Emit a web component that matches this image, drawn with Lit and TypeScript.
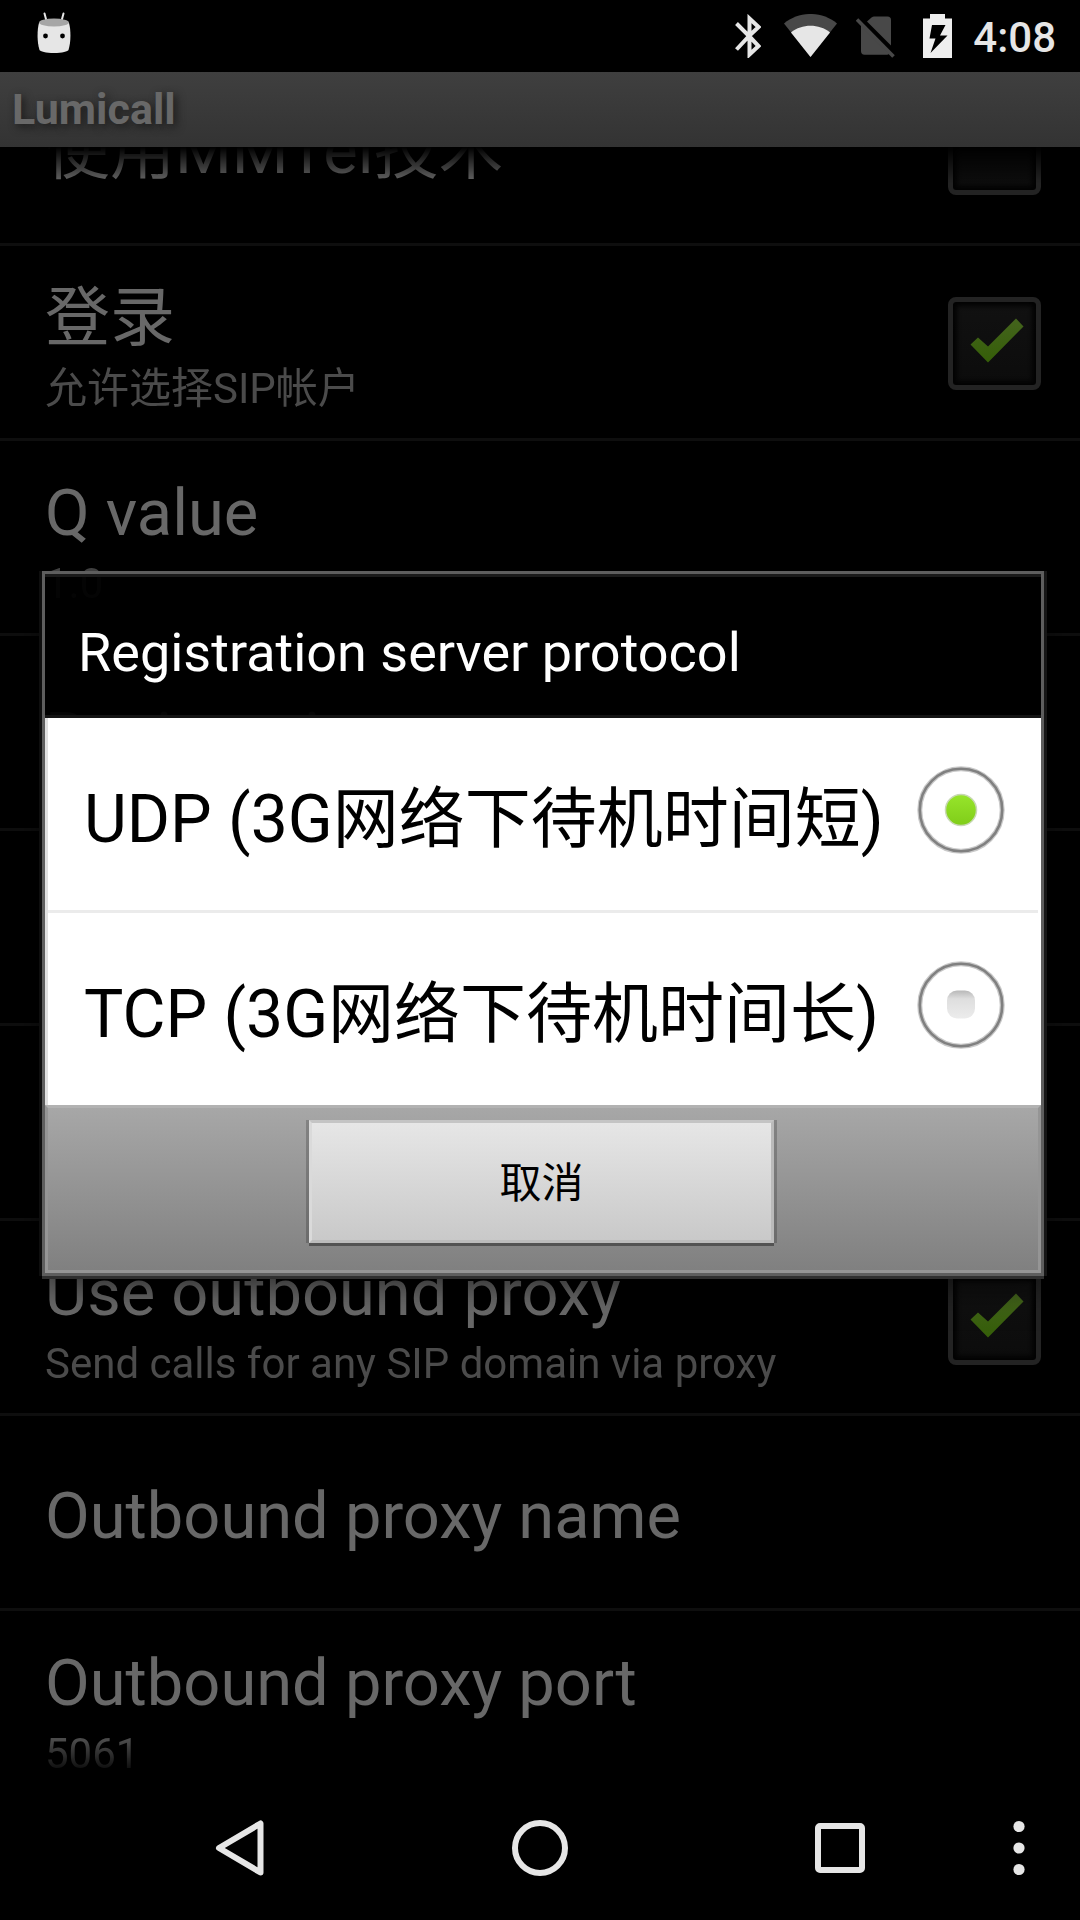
import { LitElement, html, css, svg, nothing } from "lit";
import { customElement, property, state } from "lit/decorators.js";

interface Preference {
  title: string;
  summary?: string;
  checked?: boolean;
}

const PREFERENCES: Preference[] = [
  { title: "使用MMTel技术", checked: false },
  { title: "登录", summary: "允许选择SIP帐户", checked: true },
  { title: "Q value", summary: "1.0" },
  { title: "Registration" },
  { title: "" },
  { title: "" },
  { title: "Use outbound proxy", summary: "Send calls for any SIP domain via proxy", checked: true },
  { title: "Outbound proxy name" },
  { title: "Outbound proxy port", summary: "5061" },
];

const PROTOCOLS = [
  { id: "udp", label: "UDP (3G网络下待机时间短)" },
  { id: "tcp", label: "TCP (3G网络下待机时间长)" },
];

@customElement("status-bar")
export class StatusBar extends LitElement {
  static styles = css`
    :host {
      display: flex;
      align-items: flex-start;
      box-sizing: border-box;
      height: 72px;
      padding: 12px 24px 0 37px;
      background: #000;
      color: #e6e6e6;
    }
    .space { flex: 1; }
    .icon { display: block; flex: none; margin-top: 2px; }
    .robot { margin-top: 0; }
    .bluetooth { margin-right: 23px; }
    .wifi { margin-right: 19px; }
    .sim { margin-right: 28px; }
    .battery { margin-right: 21px; }
    .time { font-size: 42px; line-height: 52px; font-weight: 500; }
  `;

  render() {
    return html`
      <svg class="icon robot" width="34" height="42" viewBox="0 0 34 42" aria-hidden="true">
        <path d="M7.500 1.500 9.500 9M26.500 1.500 24.500 9" stroke="#e6e6e6" stroke-width="2" stroke-linecap="round" />
        <path d="M2 11C0 18 0 30 2.500 38 3 39.500 9 41 17 41S31 39.500 31.500 38C34 30 34 18 32 11Z" fill="#e6e6e6" />
        <ellipse cx="17" cy="10.500" rx="15" ry="4" fill="#a6a6a6" />
        <circle cx="8.500" cy="24" r="2.400" fill="#000" />
        <circle cx="25.500" cy="24" r="2.400" fill="#000" />
      </svg>
      <span class="space"></span>
      <svg class="icon bluetooth" width="26" height="44" viewBox="0 0 26 44" fill="none" stroke="#e6e6e6" stroke-width="4" aria-hidden="true">
        <path d="M1.500 9.500 14 22 1.500 35.500M14 22 23.500 32 14.500 40.500V4.500L23.500 13 14 22" />
      </svg>
      <svg class="icon wifi" width="53" height="43" viewBox="0 0 53 43" aria-hidden="true">
        <path d="M0 9.500C15-3.200 38-3.200 53 9.500L26.500 43Z" fill="#484848" />
        <path d="M7 18.500C18 9.600 35 9.600 46 18.500L26.500 43Z" fill="#e6e6e6" />
      </svg>
      <svg class="icon sim" width="39" height="45" viewBox="0 0 39 45" aria-hidden="true">
        <path d="M11 7.500 15.500 3.500Q17 2.500 18 2.500H31.500Q35 2.500 35 6V31.500Z" fill="#484848" />
        <path d="M5 11 33 39.500Q32.500 40.700 31 40.700H8.500Q5 40.700 5 37Z" fill="#484848" />
        <path d="M1 5.500 37.500 42.500" stroke="#484848" stroke-width="3.600" />
      </svg>
      <svg class="icon battery" width="29" height="44" viewBox="0 0 29 44" aria-hidden="true">
        <path d="M7 0H22V4.500H29V44H0V4.500H7Z" fill="#eee" />
        <path d="M9 11H22.500L17 21.500H24.500L7.500 39 12.500 24.500H6.500Z" fill="#000" />
      </svg>
      <span class="time">4:08</span>
    `;
  }
}

@customElement("preference-row")
export class PreferenceRow extends LitElement {
  static styles = css`
    :host {
      display: block;
      border-bottom: 3px solid #0e0e0e;
    }
    .row {
      display: flex;
      align-items: center;
      box-sizing: border-box;
      min-height: 192px;
      padding: 3px 39px 0 45px;
    }
    .text { flex: 1; min-width: 0; display: flex; flex-direction: column; padding-top: 4px; }
    .title { font-size: 65px; line-height: 86px; color: #686868; white-space: nowrap; }
    .summary { font-size: 42px; line-height: 56px; color: #4b4b4b; white-space: nowrap; }
    .check { display: grid; flex: none; }
    .check > * { grid-area: 1 / 1; }
    .box {
      appearance: none;
      box-sizing: border-box;
      width: 93px;
      height: 93px;
      margin: 0;
      border: 5px solid #232323;
      border-radius: 8px;
      background: linear-gradient(#111, #0c0c0c);
      box-shadow: inset 0 0 4px 4px #030303;
    }
    .tick { pointer-events: none; z-index: 1; }
  `;

  @property({ attribute: false }) item: Preference = { title: "" };

  render() {
    const { title, summary, checked } = this.item;
    return html`
      <label class="row">
        <span class="text">
          <span class="title">${title}</span>
          ${summary ? html`<span class="summary">${summary}</span>` : nothing}
        </span>
        ${checked === undefined
          ? nothing
          : html`<span class="check">
              <input class="box" type="checkbox" .checked=${checked} />
              ${checked
                ? html`<svg class="tick" width="93" height="93" viewBox="0 0 93 93" aria-hidden="true">
                    <defs>
                      <linearGradient id="g" x1="0" y1="0" x2="0" y2="1">
                        <stop offset="0" stop-color="#44641d" />
                        <stop offset="1" stop-color="#355e08" />
                      </linearGradient>
                    </defs>
                    <path d="M22.500 47.500 30 40.500 40 49.500 68 21.500 75.500 29.500 40 65.500Z" fill="url(#g)" />
                  </svg>`
                : nothing}
            </span>`}
      </label>
    `;
  }
}

@customElement("protocol-dialog")
export class ProtocolDialog extends LitElement {
  static styles = css`
    :host {
      display: block;
      border: 3px solid #5e5e5e;
      box-shadow: 0 3px 0 #2f2f2f, 3px 0 0 #161616, -3px 0 0 #0e0e0e, 0 10px 30px rgba(0, 0, 0, 0.6);
    }
    .head {
      box-sizing: border-box;
      margin: 0;
      padding: 45px 33px 32px;
      border-top: 3px solid #1a1a1a;
      border-bottom: 3px solid #141414;
      background: rgba(0, 0, 0, 0.94);
      color: #fff;
      font-size: 54px;
      line-height: 61px;
      font-weight: 400;
    }
    .options {
      margin: 0;
      padding: 0 3px;
      border: 0;
      background: #fff;
      box-shadow: inset 3px 0 #e0e0e0;
    }
    .option {
      display: flex;
      align-items: center;
      box-sizing: border-box;
      height: 192px;
      padding: 0 33px 0 36px;
      color: #000;
      font-size: 66px;
    }
    .option + .option { border-top: 3px solid #ebebeb; height: 195px; }
    .name { flex: 1; line-height: 86px; padding-top: 12px; white-space: nowrap; }
    .pick { display: grid; flex: none; margin-bottom: 8px; }
    .pick > * { grid-area: 1 / 1; }
    .radio { appearance: none; width: 88px; height: 88px; margin: 0; border-radius: 50%; }
    .mark { pointer-events: none; }
    .foot {
      display: grid;
      grid-template-columns: 1fr 2fr 1fr;
      box-sizing: border-box;
      padding: 12px 24px 27px 21px;
      border: solid #959595;
      border-width: 3px;
      border-top-color: #b2b2b2;
      background: linear-gradient(#a7a7a7, #808080);
    }
    .cancel {
      grid-column: 2;
      height: 123px;
      margin: 0 4px;
      padding: 0 0 4px;
      border: 3px solid;
      border-color: #c4c4c4 #bababa #bcbcbc #dadada;
      border-radius: 0;
      background: linear-gradient(#e6e6e6, #c9c9c9);
      box-shadow: 0 3px 0 #535353, 3px 0 0 rgba(0, 0, 0, 0.2), -3px 0 0 rgba(0, 0, 0, 0.2);
      color: #000;
      font: inherit;
      font-size: 42px;
    }
  `;

  @state() private selected = "udp";

  private mark(on: boolean) {
    return html`<svg class="mark" width="88" height="88" viewBox="0 0 88 88" aria-hidden="true">
      <defs>
        <linearGradient id="on" x1="0" y1="0" x2="0" y2="1">
          <stop offset="0" stop-color="#97e52b" />
          <stop offset="1" stop-color="#80cd19" />
        </linearGradient>
        <linearGradient id="off" x1="0" y1="0" x2="0" y2="1">
          <stop offset="0" stop-color="#b8b8b8" />
          <stop offset="0.300" stop-color="#dedede" />
          <stop offset="1" stop-color="#ececec" />
        </linearGradient>
      </defs>
      <circle cx="44" cy="44" r="41.200" fill="none" stroke="#c9c9c9" stroke-width="5" />
      <circle cx="44" cy="44" r="41.200" fill="none" stroke="#808080" stroke-width="2.600" />
      ${on
        ? svg`<circle cx="44" cy="44" r="15.500" fill="url(#on)" stroke="#c8d8b4" stroke-width="1.500" />`
        : svg`<rect x="30" y="29.500" width="28" height="28" rx="10" fill="url(#off)" />`}
    </svg>`;
  }

  render() {
    return html`
      <h2 class="head">Registration server protocol</h2>
      <fieldset class="options" aria-label="Registration server protocol">
        ${PROTOCOLS.map(
          (p) => html`<label class="option">
            <span class="name">${p.label}</span>
            <span class="pick">
              <input
                class="radio"
                type="radio"
                name="protocol"
                .checked=${this.selected === p.id}
                @change=${() => (this.selected = p.id)}
              />
              ${this.mark(this.selected === p.id)}
            </span>
          </label>`,
        )}
      </fieldset>
      <div class="foot"><button class="cancel" type="button">取消</button></div>
    `;
  }
}

@customElement("nav-bar")
export class NavBar extends LitElement {
  static styles = css`
    :host {
      display: grid;
      grid-template-columns: 3fr 10fr 10fr 10fr 3fr;
      align-items: center;
      height: 144px;
      background: #000;
    }
    .key {
      display: grid;
      place-items: center;
      height: 144px;
      padding: 0;
      border: 0;
      background: none;
    }
    .back { grid-column: 2; }
    .menu { grid-column: 5; justify-items: start; }
  `;

  render() {
    return html`
      <button class="key back" type="button" aria-label="返回">
        <svg width="58" height="58" viewBox="0 0 58 58" fill="none" stroke="#e6e6e6" stroke-width="6" stroke-linejoin="round">
          <path d="M49.500 4.500V53.500L8 29Z" />
        </svg>
      </button>
      <button class="key" type="button" aria-label="主屏幕">
        <svg width="58" height="58" viewBox="0 0 58 58" fill="none" stroke="#e6e6e6" stroke-width="6">
          <circle cx="29" cy="29" r="25" />
        </svg>
      </button>
      <button class="key" type="button" aria-label="概览">
        <svg width="58" height="58" viewBox="0 0 58 58" fill="none" stroke="#e6e6e6" stroke-width="6">
          <rect x="7" y="7" width="44" height="44" rx="2" />
        </svg>
      </button>
      <button class="key menu" type="button" aria-label="菜单">
        <svg width="58" height="58" viewBox="0 0 58 58" fill="#e6e6e6">
          <circle cx="29" cy="7.500" r="5.600" />
          <circle cx="29" cy="29" r="5.600" />
          <circle cx="29" cy="50.500" r="5.600" />
        </svg>
      </button>
    `;
  }
}

@customElement("app-root")
export class AppRoot extends LitElement {
  static styles = css`
    :host {
      display: flex;
      flex-direction: column;
      height: 100vh;
      overflow: hidden;
      background: #000;
      font-family: Roboto, "Noto Sans CJK SC", sans-serif;
    }
    .window {
      position: relative;
      flex: 1;
      min-height: 0;
      display: flex;
      flex-direction: column;
    }
    .title-bar {
      flex: none;
      box-sizing: border-box;
      height: 75px;
      margin: 0;
      padding: 0 12px;
      background: linear-gradient(#3f3f3f, #333);
      color: #686868;
      font-size: 43px;
      line-height: 74px;
      font-weight: 700;
      text-shadow: 3px 3px 9px #1a1a1a;
    }
    .viewport {
      flex: 1;
      min-height: 0;
      overflow: hidden;
      mask-image: linear-gradient(transparent, #000 36px, #000 calc(100% - 36px), transparent);
    }
    .list { margin-top: -96px; }
    .overlay {
      position: absolute;
      inset: 0;
      display: flex;
      align-items: center;
      padding: 0 36px 1px 42px;
    }
    .dialog { flex: 1; }
  `;

  render() {
    return html`
      <status-bar></status-bar>
      <main class="window">
        <h1 class="title-bar">Lumicall</h1>
        <div class="viewport">
          <div class="list">
            ${PREFERENCES.map((p) => html`<preference-row .item=${p}></preference-row>`)}
          </div>
        </div>
        <div class="overlay">
          <protocol-dialog class="dialog" role="dialog" aria-modal="true"></protocol-dialog>
        </div>
      </main>
      <nav-bar></nav-bar>
    `;
  }
}
